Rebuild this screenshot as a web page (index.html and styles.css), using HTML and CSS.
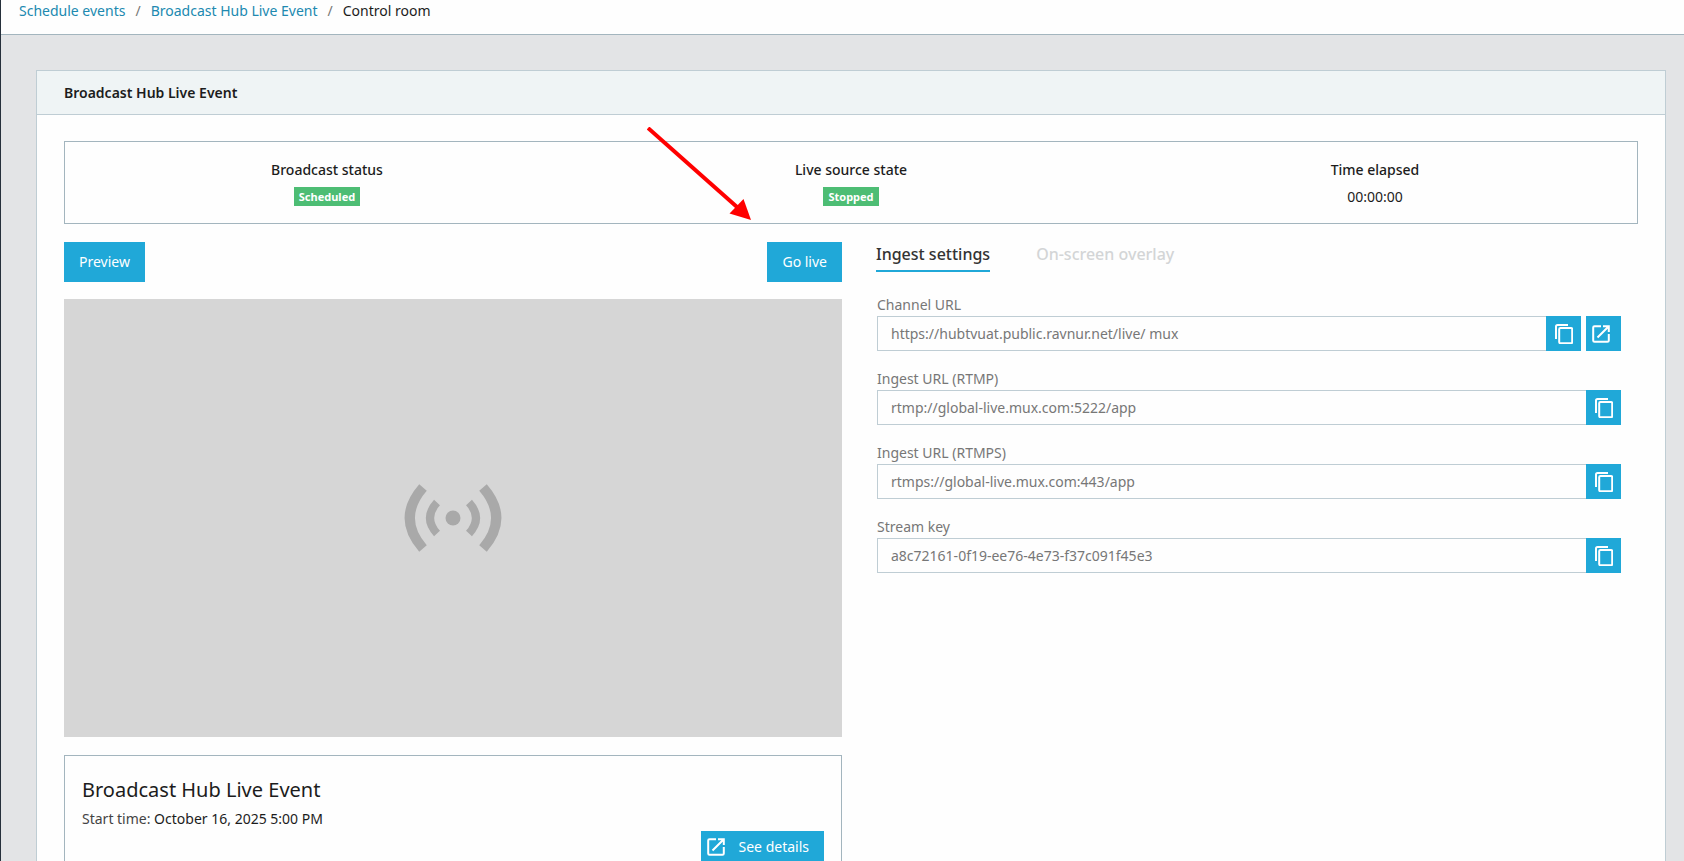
FILE: index.html
```html
<!DOCTYPE html>
<html lang="en">
<head>
    <meta charset="UTF-8">
    <meta name="viewport" content="width=device-width, initial-scale=1.0">
    <title>Control room - Broadcast Hub Live Event</title>
    <link rel="stylesheet" href="styles.css">
</head>
<body>
    <!-- Shared icons -->
    <svg class="icon-defs" aria-hidden="true">
        <symbol id="icon-copy" viewBox="0 0 18 20">
            <path d="M1 15V2.5Q1 1 2.5 1H13" />
            <rect x="4.2" y="4" width="13" height="15.2" rx="1.2" />
        </symbol>
        <symbol id="icon-open" viewBox="0 0 18 18">
            <path d="M9 1.2H2.5Q1.2 1.2 1.2 2.5V15.5Q1.2 16.8 2.5 16.8H15.5Q16.8 16.8 16.8 15.5V9" />
            <path d="M11 1.2H16.8V7M16.8 1.2L5.5 12.5" />
        </symbol>
    </svg>

    <div class="page">
        <!-- Breadcrumbs -->
        <nav class="breadcrumbs" aria-label="Breadcrumb">
            <a href="#">Schedule events</a>
            <span class="separator">/</span>
            <a href="#">Broadcast Hub Live Event</a>
            <span class="separator">/</span>
            <span class="current">Control room</span>
        </nav>

        <main class="content">
            <section class="panel">
                <h1 class="panel-header">Broadcast Hub Live Event</h1>

                <div class="panel-body">
                    <!-- Status bar -->
                    <div class="status-box">
                        <div class="status-item">
                            <div class="status-title">Broadcast status</div>
                            <span class="badge">Scheduled</span>
                        </div>
                        <div class="status-item">
                            <div class="status-title">Live source state</div>
                            <span class="badge">Stopped</span>
                        </div>
                        <div class="status-item">
                            <div class="status-title">Time elapsed</div>
                            <div class="status-value">00:00:00</div>
                        </div>
                    </div>

                    <div class="columns">
                        <!-- Player -->
                        <div class="player-column">
                            <div class="player-actions">
                                <button type="button" class="btn">Preview</button>
                                <button type="button" class="btn">Go live</button>
                            </div>

                            <div class="player">
                                <svg class="signal-icon" viewBox="0 0 98 70" aria-hidden="true">
                                    <circle cx="49" cy="35" r="7.5" />
                                    <path class="wave" d="M33 19.5Q19 35 33 50.5" />
                                    <path class="wave" d="M65 19.5Q79 35 65 50.5" />
                                    <path class="wave outer" d="M19 4.5Q-7.500 35 19 65.500" />
                                    <path class="wave outer" d="M79 4.5Q105.500 35 79 65.500" />
                                </svg>
                            </div>

                            <div class="event-card">
                                <h2 class="event-title">Broadcast Hub Live Event</h2>
                                <p class="event-time"><span class="event-label">Start time:</span> October 16, 2025 5:00 PM</p>
                                <div class="event-actions">
                                    <button type="button" class="btn btn-details">
                                        <svg class="icon icon-open" aria-hidden="true"><use href="#icon-open" /></svg>
                                        See details
                                    </button>
                                </div>
                            </div>
                        </div>

                        <!-- Ingest settings -->
                        <div class="settings-column">
                            <div class="tabs" role="tablist">
                                <button type="button" class="tab active" role="tab" aria-selected="true">Ingest settings</button>
                                <button type="button" class="tab" role="tab" aria-selected="false">On-screen overlay</button>
                            </div>

                            <div class="fields">
                                <div class="field">
                                    <label for="channelUrl">Channel URL</label>
                                    <div class="field-row">
                                        <input type="text" id="channelUrl" value="https://hubtvuat.public.ravnur.net/live/ mux" readonly>
                                        <button type="button" class="icon-btn" aria-label="Copy channel URL">
                                            <svg class="icon icon-copy" aria-hidden="true"><use href="#icon-copy" /></svg>
                                        </button>
                                        <button type="button" class="icon-btn open-btn" aria-label="Open channel URL">
                                            <svg class="icon icon-open" aria-hidden="true"><use href="#icon-open" /></svg>
                                        </button>
                                    </div>
                                </div>
                                <div class="field">
                                    <label for="rtmpUrl">Ingest URL (RTMP)</label>
                                    <div class="field-row">
                                        <input type="text" id="rtmpUrl" value="rtmp://global-live.mux.com:5222/app" readonly>
                                        <button type="button" class="icon-btn" aria-label="Copy RTMP URL">
                                            <svg class="icon icon-copy" aria-hidden="true"><use href="#icon-copy" /></svg>
                                        </button>
                                    </div>
                                </div>
                                <div class="field">
                                    <label for="rtmpsUrl">Ingest URL (RTMPS)</label>
                                    <div class="field-row">
                                        <input type="text" id="rtmpsUrl" value="rtmps://global-live.mux.com:443/app" readonly>
                                        <button type="button" class="icon-btn" aria-label="Copy RTMPS URL">
                                            <svg class="icon icon-copy" aria-hidden="true"><use href="#icon-copy" /></svg>
                                        </button>
                                    </div>
                                </div>
                                <div class="field">
                                    <label for="streamKey">Stream key</label>
                                    <div class="field-row">
                                        <input type="text" id="streamKey" value="a8c72161-0f19-ee76-4e73-f37c091f45e3" readonly>
                                        <button type="button" class="icon-btn" aria-label="Copy stream key">
                                            <svg class="icon icon-copy" aria-hidden="true"><use href="#icon-copy" /></svg>
                                        </button>
                                    </div>
                                </div>
                            </div>
                        </div>
                    </div>
                </div>
            </section>
        </main>

        <!-- Pointer to the Go live button -->
        <svg class="pointer" viewBox="0 0 104 94" aria-hidden="true">
            <path class="pointer-line" d="M1 1L90 80" />
            <path class="pointer-head" d="M104 93L96.500 72L82.500 86.500Z" />
        </svg>
    </div>
</body>
</html>
```

FILE: styles.css
```css
* {
    margin: 0;
    padding: 0;
    box-sizing: border-box;
}

body {
    font-family: 'Segoe UI', 'Noto Sans', 'Open Sans', sans-serif;
    font-size: 14px;
    line-height: 20px;
    color: #1c1c1c;
    background: #e3e4e6;
    height: 100vh;
    overflow: hidden;
}

button,
input {
    font: inherit;
}

button {
    border: none;
    cursor: pointer;
}

.icon-defs {
    display: none;
}

.page {
    position: relative;
    min-height: 100vh;
    border-left: 1px solid #26303b;
}

/* Breadcrumbs */
.breadcrumbs {
    display: flex;
    gap: 10px;
    padding: 1px 18px 13px;
    background: #fefefe;
    border-bottom: 1px solid #a3b5be;
}

.breadcrumbs a {
    color: #2089b0;
    text-decoration: none;
}

.breadcrumbs a:hover {
    text-decoration: underline;
}

.separator {
    color: #777;
}

/* Panel */
.content {
    padding: 35px 18px 35px 35px;
}

.panel {
    background: #fefefe;
    border: 1px solid #bfcdd4;
}

.panel-header {
    padding: 12px 27px 11px;
    font-size: 14px;
    font-weight: 600;
    background: #eff4f5;
    border-bottom: 1px solid #bfcdd4;
}

.panel-body {
    padding: 26px 27px;
}

/* Status box */
.status-box {
    display: grid;
    grid-template-columns: repeat(3, 1fr);
    padding: 18px 0 16px;
    border: 1px solid #a3b5be;
    text-align: center;
}

.status-title {
    margin-bottom: 7px;
    font-weight: 500;
}

.badge {
    display: block;
    width: fit-content;
    margin: 0 auto;
    padding: 0 5px;
    background: #4dbd74;
    color: #fff;
    font-size: 11px;
    font-weight: 700;
    line-height: 19px;
}

/* Columns */
.columns {
    display: grid;
    grid-template-columns: 1fr 1fr;
    margin-top: 18px;
}

.player-column {
    padding-right: 9px;
}

.player-actions {
    display: flex;
    justify-content: space-between;
    margin-bottom: 17px;
}

.btn {
    height: 40px;
    padding: 0 15px;
    background: #20a8d8;
    color: #fff;
}

.btn:hover,
.icon-btn:hover {
    background: #1b8eb7;
}

.player {
    display: flex;
    align-items: center;
    justify-content: center;
    aspect-ratio: 16 / 9;
    background: #d6d6d6;
}

.signal-icon {
    width: 98px;
    height: 70px;
    fill: #a9a9a9;
}

.wave {
    fill: none;
    stroke: #a9a9a9;
    stroke-width: 8;
}

.wave.outer {
    stroke-width: 10;
}

/* Event card */
.event-card {
    margin-top: 18px;
    padding: 18px 17px;
    border: 1px solid #a3b5be;
}

.event-title {
    font-size: 20px;
    font-weight: 400;
    line-height: 32px;
}

.event-time {
    margin-top: 3px;
}

.event-label {
    color: #444;
}

.event-actions {
    display: flex;
    justify-content: flex-end;
    margin-top: 2px;
}

.btn-details {
    display: flex;
    align-items: center;
    gap: 14px;
    height: 32px;
    padding: 0 15px 0 6px;
}

/* Ingest settings */
.settings-column {
    padding: 0 17px 0 25px;
}

.tabs {
    display: flex;
    gap: 46px;
}

.tab {
    padding-bottom: 4px;
    background: none;
    border-bottom: 2px solid transparent;
    color: #d3d5d6;
    font-size: 16px;
    font-weight: 500;
    line-height: 24px;
}

.tab.active {
    border-bottom-color: #20a8d8;
    color: #333;
}

.fields {
    display: flex;
    flex-direction: column;
    gap: 18px;
    margin-top: 23px;
    padding-left: 1px;
}

.field label {
    display: block;
    padding-bottom: 1px;
    color: #777;
}

.field-row {
    display: flex;
}

.field-row input {
    flex: 1;
    min-width: 0;
    height: 35px;
    padding: 0 13px;
    border: 1px solid #bfcdd4;
    border-right: none;
    background: transparent;
    color: #777;
}

.field-row input:focus {
    outline: none;
    border-color: #20a8d8;
}

.icon-btn {
    display: flex;
    align-items: center;
    width: 35px;
    padding-left: 9px;
    background: #20a8d8;
}

.open-btn {
    margin-left: 5px;
    padding-left: 6px;
}

.icon {
    width: 18px;
    fill: none;
    stroke: #fff;
    stroke-width: 2;
}

.icon-copy {
    height: 20px;
}

.icon-open {
    height: 18px;
}

/* Pointer arrow over the panel */
.pointer {
    position: absolute;
    top: 127px;
    left: 646px;
    width: 104px;
    height: 94px;
    pointer-events: none;
}

.pointer-line {
    stroke: #f00;
    stroke-width: 4;
}

.pointer-head {
    fill: #f00;
}
```
